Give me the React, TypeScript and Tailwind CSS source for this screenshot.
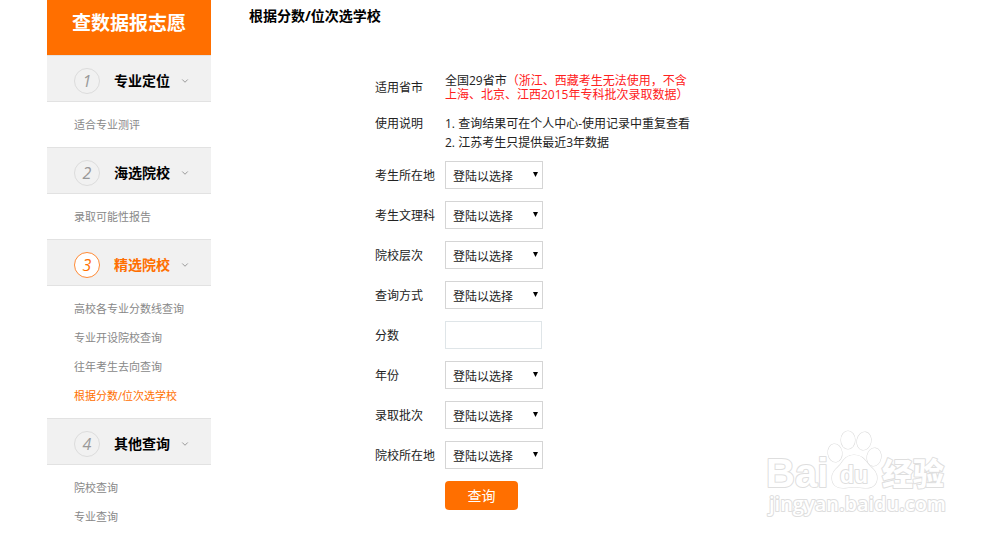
import { ChevronDown } from "lucide-react";
import clsx from "clsx";

const SECTIONS = [
  { title: "专业定位", items: ["适合专业测评"] },
  { title: "海选院校", items: ["录取可能性报告"] },
  {
    title: "精选院校",
    items: [
      "高校各专业分数线查询",
      "专业开设院校查询",
      "往年考生去向查询",
      "根据分数/位次选学校",
    ],
  },
  { title: "其他查询", items: ["院校查询", "专业查询"] },
];

const ACTIVE_ITEM = "根据分数/位次选学校";

const FIELDS = [
  { id: "location", label: "考生所在地", type: "select" },
  { id: "subject", label: "考生文理科", type: "select" },
  { id: "level", label: "院校层次", type: "select" },
  { id: "mode", label: "查询方式", type: "select" },
  { id: "score", label: "分数", type: "text" },
  { id: "year", label: "年份", type: "select" },
  { id: "batch", label: "录取批次", type: "select" },
  { id: "school-location", label: "院校所在地", type: "select" },
];

export default function App() {
  return (
    <div className="relative flex min-h-screen bg-white pl-[47px] font-['Open_Sans','Noto_Sans_CJK_SC',sans-serif] text-xs text-[#222]">
      <Sidebar />
      <main className="min-w-0 flex-1 pl-[38px]">
        <h1 className="pt-1.5 text-sm leading-5 font-bold text-black">
          根据分数/位次选学校
        </h1>
        <QueryForm />
      </main>
      <Watermark />
    </div>
  );
}

function Sidebar() {
  return (
    <nav className="w-[164px] shrink-0">
      <div className="h-[55px] bg-[#ff6f00] pt-2 text-center text-[19px] leading-[30px] font-bold text-white">
        查数据报志愿
      </div>
      {SECTIONS.map((section, i) => {
        const active = section.items.includes(ACTIVE_ITEM);
        return (
          <section key={section.title} className="group">
            <button
              type="button"
              className="flex h-[47px] w-full items-center border-y border-[#e2e2e2] bg-[#f1f1f1] pt-1 pl-[27px]"
            >
              <span
                className={clsx(
                  "flex size-[26px] items-center justify-center rounded-full border text-base leading-none italic",
                  active
                    ? "border-[#ff8a35] bg-white text-[#ff6f00]"
                    : "border-[#dcdcdc] text-[#999]",
                )}
              >
                {i + 1}
              </span>
              <span
                className={clsx(
                  "ml-3.5 text-sm font-bold",
                  active ? "text-[#ff6f00]" : "text-black",
                )}
              >
                {section.title}
              </span>
              <ChevronDown className="ml-2.5 size-2.5 text-[#888]" />
            </button>
            <ul className="py-2 pl-[27px] text-[11px] leading-[29px] group-last:pb-0">
              {section.items.map((item) => (
                <li key={item}>
                  <a
                    href="#"
                    className={clsx(
                      "block",
                      item === ACTIVE_ITEM ? "text-[#ff6f00]" : "text-[#888]",
                    )}
                  >
                    {item}
                  </a>
                </li>
              ))}
            </ul>
          </section>
        );
      })}
    </nav>
  );
}

function QueryForm() {
  return (
    <form className="pt-12 pl-[126px]">
      <dl className="grid grid-cols-[70px_1fr]">
        <dt className="self-center">适用省市</dt>
        <dd className="leading-[14px]">
          全国29省市
          <span className="text-[#ff2020]">
            （浙江、西藏考生无法使用，不含
            <br />
            上海、北京、江西2015年专科批次录取数据）
          </span>
        </dd>
        <dt className="pt-3 leading-[19px]">使用说明</dt>
        <dd className="pt-3 leading-[19px]">
          <p>1. 查询结果可在个人中心-使用记录中重复查看</p>
          <p>2. 江苏考生只提供最近3年数据</p>
        </dd>
      </dl>
      <div className="flex flex-col gap-3 pt-[9px]">
        {FIELDS.map((field) => (
          <div key={field.id} className="flex items-center">
            <label htmlFor={field.id} className="w-[70px] shrink-0 pt-0.5">
              {field.label}
            </label>
            {field.type === "select" ? (
              <SelectBox id={field.id} />
            ) : (
              <input
                id={field.id}
                type="text"
                className="h-7 w-[97px] border border-[#dfe5e8] px-2"
              />
            )}
          </div>
        ))}
        <button
          type="button"
          className="ml-[70px] h-[29px] w-[73px] rounded bg-[#ff6f00] text-sm text-white"
        >
          查询
        </button>
      </div>
    </form>
  );
}

function SelectBox({ id }: { id: string }) {
  return (
    <div className="relative">
      <select
        id={id}
        className="block h-7 w-[98px] appearance-none border border-[#d5d5d5] bg-white pt-1 pl-[7px]"
      >
        <option>登陆以选择</option>
      </select>
      <svg
        viewBox="0 0 6 6"
        className="pointer-events-none absolute top-[11px] right-[5px] size-[5px]"
      >
        <path d="M0 0h6L3 6z" fill="#000" />
      </svg>
    </div>
  );
}

function Watermark() {
  return (
    <svg
      viewBox="0 0 186 92"
      className="pointer-events-none absolute right-[50px] bottom-[18px] h-[92px] w-[186px] font-['Liberation_Sans','Noto_Sans_CJK_SC',sans-serif] [paint-order:stroke]"
      fill="#fff"
      stroke="#dedede"
      strokeWidth="2"
      strokeLinejoin="round"
    >
      <text x="2" y="59" fontSize="40" fontWeight="700">
        Bai
      </text>
      <g strokeWidth="1.2">
        <ellipse cx="71" cy="25" rx="7" ry="9" transform="rotate(-8 71 25)" />
        <ellipse cx="84" cy="12" rx="7" ry="9" />
        <ellipse cx="100" cy="13" rx="7" ry="9" transform="rotate(12 100 13)" />
        <ellipse cx="110" cy="29" rx="7" ry="9" transform="rotate(10 110 29)" />
        <path d="M90 27c-8 0-11 6-14 10-4 4-8 7-8 13 0 7 5 10 11 10 4 0 7-1 11-1s8 1 12 1c7 0 11-4 11-10s-4-9-8-13c-4-5-7-10-15-10z" />
      </g>
      <text x="76" y="55" fontSize="23" fontWeight="700">
        du
      </text>
      <text x="118" y="57" fontSize="31" fontWeight="900">
        经验
      </text>
      <text
        x="5"
        y="83"
        fontSize="20"
        fontWeight="600"
        className="font-['Open_Sans',sans-serif]"
      >
        jingyan.baidu.com
      </text>
    </svg>
  );
}
